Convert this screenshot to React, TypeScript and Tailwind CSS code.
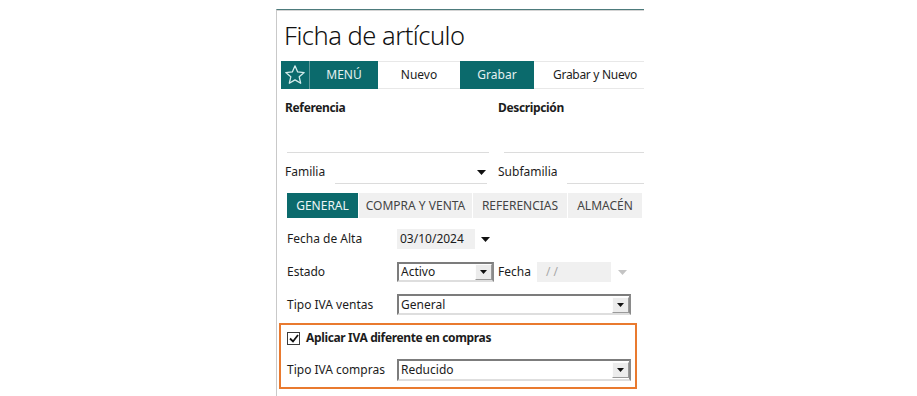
const teal = "bg-[#0b6a6c]";

function Arrow({ light }: { light?: boolean }) {
  return (
    <svg width="9" height="5" viewBox="0 0 9 5" className="shrink-0">
      <polygon points="0,0 9,0 4.5,5" fill={light ? "#c4c4c4" : "#111"} />
    </svg>
  );
}

function Select({ value, width }: { value: string; width: string }) {
  return (
    <div
      className={`flex h-full items-center justify-between border-2 border-[#7c7c7c] border-b-[#dedede] border-r-[#8a8a8a] bg-white pl-[2px] ${width}`}
    >
      <span>{value}</span>
      <div className="flex h-[16px] w-[17px] items-center justify-center border border-[#fdfdfd] border-b-[#9a9a9a] border-r-[#9a9a9a] bg-[#ececec]">
        <svg width="7" height="4" viewBox="0 0 7 4">
          <polygon points="0,0 7,0 3.5,4" fill="#111" />
        </svg>
      </div>
    </div>
  );
}

export default function App() {
  return (
    <div
      className="h-[396px] w-[917px] overflow-hidden bg-white text-[12px] text-[#1c1c1c]"
      style={{ fontFamily: '"Noto Sans", "Open Sans", sans-serif' }}
    >
      <div className="ml-[276px] mt-[9px] h-[387px] w-[368px] border-l border-t border-l-[#c9c9c9] border-t-[#4d7b7c]">
        <div className="h-full border-t border-t-[#d4d4d4]">
          {/* title */}
          <div className="pl-[7px] pt-[7px] text-[25.5px] leading-[34px] font-light tracking-[-0.5px] text-[#111]">
            Ficha de artículo
          </div>

          {/* toolbar */}
          <div className="ml-[4px] mt-[9px] flex h-[28px] items-stretch">
            <div className={`flex w-[28px] items-center justify-center ${teal}`}>
              <svg width="22" height="22" viewBox="0 0 24 24">
                <polygon
                  points="12,2 14.9,8.6 22,9.3 16.6,14 18.2,21 12,17.3 5.8,21 7.4,14 2,9.3 9.1,8.6"
                  fill="none"
                  stroke="#d6ecec"
                  strokeWidth="1.4"
                  strokeLinejoin="round"
                />
              </svg>
            </div>
            <div className="w-[1px] bg-[#5f9a9b]" />
            <div className={`flex w-[68px] items-center justify-center text-[#e4f0f0] ${teal}`}>
              MENÚ
            </div>
            <div className="flex w-[82px] items-center justify-center border-y border-[#e8e8e8] bg-white">
              Nuevo
            </div>
            <div className={`flex w-[74px] items-center justify-center text-[#e4f0f0] ${teal}`}>
              Grabar
            </div>
            <div className="flex flex-1 items-center justify-center border-y border-[#e8e8e8] bg-white pl-[12px] tracking-[-0.3px]">
              Grabar y Nuevo
            </div>
          </div>

          {/* referencia / descripcion */}
          <div className="mt-[11px] flex pl-[8px] font-bold leading-[16px] tracking-[-0.35px]">
            <div className="w-[213px]">Referencia</div>
            <div>Descripción</div>
          </div>
          <div className="flex h-[37px]">
            <div className="ml-[10px] w-[202px] border-b border-[#dcdcdc]" />
            <div className="ml-[15px] flex-1 border-b border-[#dcdcdc]" />
          </div>

          {/* familia / subfamilia */}
          <div className="mt-[11px] flex h-[20px] pl-[8px] leading-[16px]">
            <div className="w-[50px]">Familia</div>
            <div className="flex w-[152px] items-start justify-end border-b border-[#dcdcdc] pr-[1px] pt-[6px]">
              <Arrow />
            </div>
            <div className="ml-[11px] w-[69px]">Subfamilia</div>
            <div className="flex-1 border-b border-[#dcdcdc]" />
          </div>

          {/* tabs */}
          <div className="ml-[10px] mt-[9px] flex h-[25px] gap-[1px] uppercase">
            <div className={`flex w-[71px] items-center justify-center text-[#eef6f6] ${teal}`}>
              General
            </div>
            <div className="flex w-[113px] items-center justify-center bg-[#f0f0f0] text-[#444]">
              Compra y venta
            </div>
            <div className="flex w-[94px] items-center justify-center bg-[#f0f0f0] text-[#444]">
              Referencias
            </div>
            <div className="flex w-[74px] items-center justify-center bg-[#f0f0f0] text-[#444]">
              Almacén
            </div>
          </div>

          {/* form */}
          <div className="pl-[10px]">
            <div className="mt-[11px] flex h-[20px] items-center">
              <div className="w-[110px]">Fecha de Alta</div>
              <div className="flex h-full w-[78px] items-center bg-[#f0f0f0] pl-[3px]">03/10/2024</div>
              <div className="ml-[6px]">
                <Arrow />
              </div>
            </div>

            <div className="mt-[13px] flex h-[20px] items-center">
              <div className="w-[110px]">Estado</div>
              <Select value="Activo" width="w-[97px]" />
              <div className="ml-[4px] w-[39px]">Fecha</div>
              <div className="flex h-full w-[74px] items-center bg-[#f0f0f0] pl-[9px] text-[#a8a8a8]">/ /</div>
              <div className="ml-[7px]">
                <Arrow light />
              </div>
            </div>

            <div className="mt-[12px] flex h-[21px] items-center">
              <div className="w-[110px]">Tipo IVA ventas</div>
              <Select value="General" width="w-[234px]" />
            </div>
          </div>

          {/* highlighted block */}
          <div className="ml-[2px] mt-[8px] h-[66px] w-[358px] border-2 border-[#e97a2f]">
            <div className="ml-[6px] mt-[4px] flex items-center gap-[6px]">
              <div className="flex h-[13px] w-[13px] items-center justify-center border border-[#3a3a3a] bg-white">
                <svg width="10" height="9" viewBox="0 0 10 9">
                  <polyline points="1,4.5 4,7.5 9,1" fill="none" stroke="#111" strokeWidth="1.8" />
                </svg>
              </div>
              <span className="font-bold tracking-[-0.35px]">Aplicar IVA diferente en compras</span>
            </div>
            <div className="ml-[6px] mt-[12px] flex h-[22px] items-center">
              <div className="w-[110px]">Tipo IVA compras</div>
              <Select value="Reducido" width="w-[234px]" />
            </div>
          </div>
        </div>
      </div>
    </div>
  );
}
